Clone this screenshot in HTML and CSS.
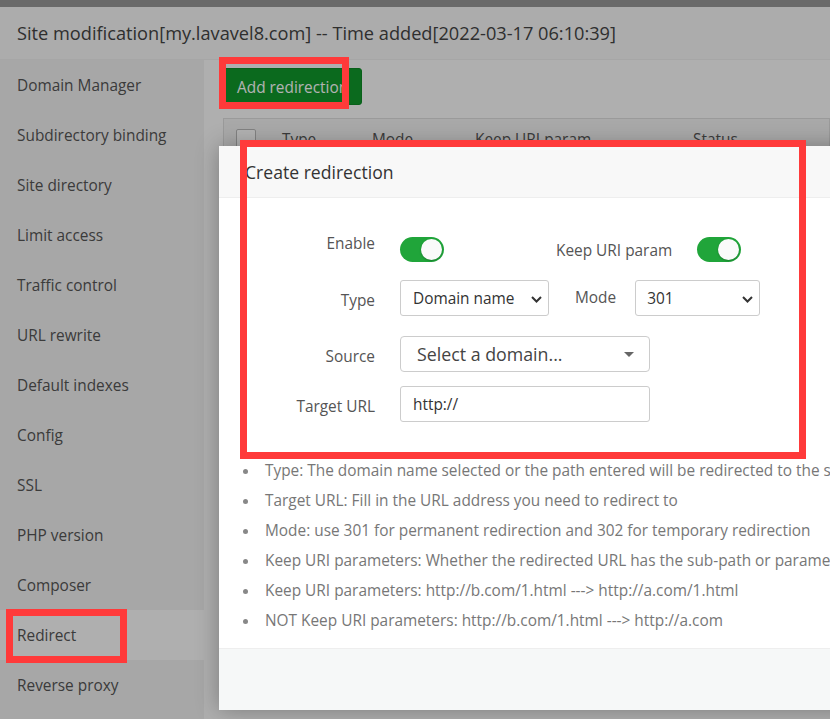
FILE: index.html
```html
<!DOCTYPE html>
<html lang="en">
<head>
<meta charset="utf-8">
<title>Site modification</title>
<link rel="stylesheet" href="styles.css">
</head>
<body>
<div class="topbar"></div>
<div class="header">Site modification[my.lavavel8.com] -- Time added[2022-03-17 06:10:39]</div>
<div class="main">
  <ul class="sidebar">
    <li>Domain Manager</li>
    <li>Subdirectory binding</li>
    <li>Site directory</li>
    <li>Limit access</li>
    <li>Traffic control</li>
    <li>URL rewrite</li>
    <li>Default indexes</li>
    <li>Config</li>
    <li>SSL</li>
    <li>PHP version</li>
    <li>Composer</li>
    <li class="active">Redirect</li>
    <li>Reverse proxy</li>
  </ul>
  <div class="content">
    <button class="btn-green">Add redirection</button>
    <div class="grid">
      <div class="grid-head">
        <span class="chk"></span>
        <span class="th">Type</span>
        <span class="th">Mode</span>
        <span class="th">Keep URI param</span>
        <span class="th">Status</span>
      </div>
    </div>
  </div>
</div>

<div class="mask"></div>

<div class="modal">
  <div class="modal-head">Create redirection</div>
  <div class="modal-body">
    <div class="form">
      <div class="row row-switch">
        <label class="lbl">Enable</label>
        <span class="switch on"><span class="knob"></span></span>
        <label class="lbl-keep">Keep URI param</label>
        <span class="switch on"><span class="knob"></span></span>
      </div>
      <div class="row">
        <label class="lbl">Type</label>
        <div class="select sel-type"><span>Domain name</span>
          <svg class="chev" width="11" height="7" viewBox="0 0 11 7"><path d="M1 1l4.5 4.5L10 1" fill="none" stroke="#333" stroke-width="2"/></svg>
        </div>
        <label class="lbl-mode">Mode</label>
        <div class="select sel-mode"><span>301</span>
          <svg class="chev" width="11" height="7" viewBox="0 0 11 7"><path d="M1 1l4.5 4.5L10 1" fill="none" stroke="#333" stroke-width="2"/></svg>
        </div>
      </div>
      <div class="row row-source">
        <label class="lbl">Source</label>
        <div class="select sel-source"><span>Select a domain...</span>
          <svg class="caret" width="10" height="5" viewBox="0 0 10 5"><path d="M0 0h10L5 5z" fill="#666"/></svg>
        </div>
      </div>
      <div class="row row-last">
        <label class="lbl">Target URL</label>
        <div class="input">http://</div>
      </div>
    </div>
    <ul class="tips">
      <li>Type: The domain name selected or the path entered will be redirected to the specified target URL</li>
      <li>Target URL: Fill in the URL address you need to redirect to</li>
      <li>Mode: use 301 for permanent redirection and 302 for temporary redirection</li>
      <li>Keep URI parameters: Whether the redirected URL has the sub-path or parameters</li>
      <li>Keep URI parameters: http://b.com/1.html ---&gt; http://a.com/1.html</li>
      <li>NOT Keep URI parameters: http://b.com/1.html ---&gt; http://a.com</li>
    </ul>
  </div>
  <div class="modal-foot"></div>
</div>

<div class="mark mark-btn"></div>
<div class="mark mark-form"></div>
<div class="mark mark-nav"></div>
</body>
</html>
```
FILE: styles.css
```css
* { box-sizing: border-box; }
html, body {
  margin: 0;
  padding: 0;
  width: 830px;
  height: 719px;
  overflow: hidden;
}
body {
  font-family: "Open Sans", "Noto Sans", sans-serif;
  font-size: 15.4px;
  color: #555;
  background: #fbfbfb;
  position: relative;
}
.topbar {
  height: 7px;
  background: #999;
}
.header {
  height: 53px;
  background: #f7f7f7;
  padding-left: 17px;
  font-size: 18.2px;
  line-height: 52px;
  color: #444;
  border-bottom: 1px solid #eee;
  white-space: nowrap;
}
.main {
  display: flex;
  height: 659px;
}
.sidebar {
  list-style: none;
  margin: 0;
  padding: 0;
  width: 204px;
  background: #f0f0f0;
  flex: none;
}
.sidebar li {
  height: 50px;
  line-height: 48px;
  padding-top: 2px;
  padding-left: 17px;
  color: #555;
  white-space: nowrap;
}
.sidebar li.active {
  background: #fbfbfb;
}
.content {
  flex: 1;
  padding: 8px 0 0 19px;
  background: #fbfbfb;
}
.btn-green {
  display: block;
  width: 139px;
  height: 37px;
  padding: 1px 0 0 13px;
  text-align: left;
  border: 1px solid #0d8a26;
  border-radius: 3px;
  background: #10992c;
  color: #fff;
  font-family: inherit;
  font-size: 15.4px;
  white-space: nowrap;
  overflow: hidden;
}
.grid {
  margin-top: 13px;
  border: 1px solid #ddd;
  height: 120px;
  background: #fff;
}
.grid-head {
  display: grid;
  grid-template-columns: 58px 90px 103px 218px 1fr;
  align-items: center;
  height: 40px;
  background: #f2f2f2;
  color: #555;
}
.chk {
  width: 20px;
  height: 20px;
  border: 1px solid #bbb;
  border-radius: 2px;
  background: #fff;
  margin-left: 12px;
}
.th { white-space: nowrap; }

.mask {
  position: absolute;
  inset: 0;
  background: rgba(0, 0, 0, 0.3);
}

.modal {
  position: absolute;
  left: 219px;
  top: 146px;
  width: 760px;
  height: 564px;
  background: #fff;
  box-shadow: 0 0 22px rgba(0, 0, 0, 0.3);
  display: flex;
  flex-direction: column;
}
.modal-head {
  height: 52px;
  background: #f8f8f8;
  border-bottom: 1px solid #eee;
  padding-left: 26px;
  line-height: 52px;
  font-size: 17.6px;
  color: #333;
}
.modal-body {
  flex: 1;
  padding-top: 35px;
}
.modal-foot {
  height: 62px;
  background: #f6f8f8;
  border-top: 1px solid #eee;
}
.form {
  padding-left: 20px;
}
.row {
  display: flex;
  align-items: flex-start;
  margin-bottom: 20px;
}
.row-switch { margin-bottom: 18px; height: 29px; }
.row-source { margin-bottom: 14px; }
.row-last { margin-bottom: 0; }
.lbl {
  width: 136px;
  height: 36px;
  margin-right: 25px;
  text-align: right;
  line-height: 32px;
  padding-top: 5px;
  color: #555;
  flex: none;
  white-space: nowrap;
}
.row-switch .lbl {
  height: 21px;
  line-height: 20px;
  padding-top: 1px;
}
.switch {
  display: block;
  width: 44px;
  height: 25px;
  border-radius: 13px;
  background: #20a53a;
  position: relative;
  margin-top: 4px;
  flex: none;
}
.switch .knob {
  position: absolute;
  top: 2px;
  right: 2px;
  width: 21px;
  height: 21px;
  border-radius: 50%;
  background: #fafafa;
  box-shadow: 0 1px 2px rgba(0, 0, 0, 0.25);
}
.lbl-keep {
  margin-left: 112px;
  margin-right: 25px;
  line-height: 20px;
  margin-top: 8px;
  white-space: nowrap;
}
.lbl-mode {
  margin-left: 26px;
  margin-right: 19px;
  line-height: 36px;
  white-space: nowrap;
}
.select, .input {
  height: 36px;
  border: 1px solid #ccc;
  border-radius: 3px;
  background: #fff;
  display: flex;
  align-items: center;
  color: #333;
  position: relative;
  flex: none;
  white-space: nowrap;
}
.sel-type { width: 149px; padding-left: 12px; }
.sel-mode { width: 125px; padding-left: 11px; }
.chev {
  position: absolute;
  right: 6px;
  top: 15px;
}
.sel-source {
  width: 250px;
  padding-left: 16px;
  border-radius: 4px;
  font-size: 17.8px;
  color: #444;
}
.caret {
  position: absolute;
  right: 15px;
  top: 15px;
}
.input {
  width: 250px;
  padding-left: 12px;
}
.tips {
  list-style: none;
  margin: 34px 0 0;
  padding: 0 0 0 46px;
  color: #777;
  white-space: nowrap;
}
.tips li {
  line-height: 30px;
  position: relative;
}
.tips li::before {
  content: "";
  position: absolute;
  left: -22px;
  top: 13px;
  width: 5px;
  height: 5px;
  border-radius: 50%;
  background: #888;
}

.mark {
  position: absolute;
  border: 7px solid #ff3a3a;
}
.mark-btn { left: 219px; top: 57px; width: 130px; height: 52px; }
.mark-form { left: 240px; top: 140px; width: 566px; height: 319px; }
.mark-nav { left: 6px; top: 609px; width: 121px; height: 54px; }
```
